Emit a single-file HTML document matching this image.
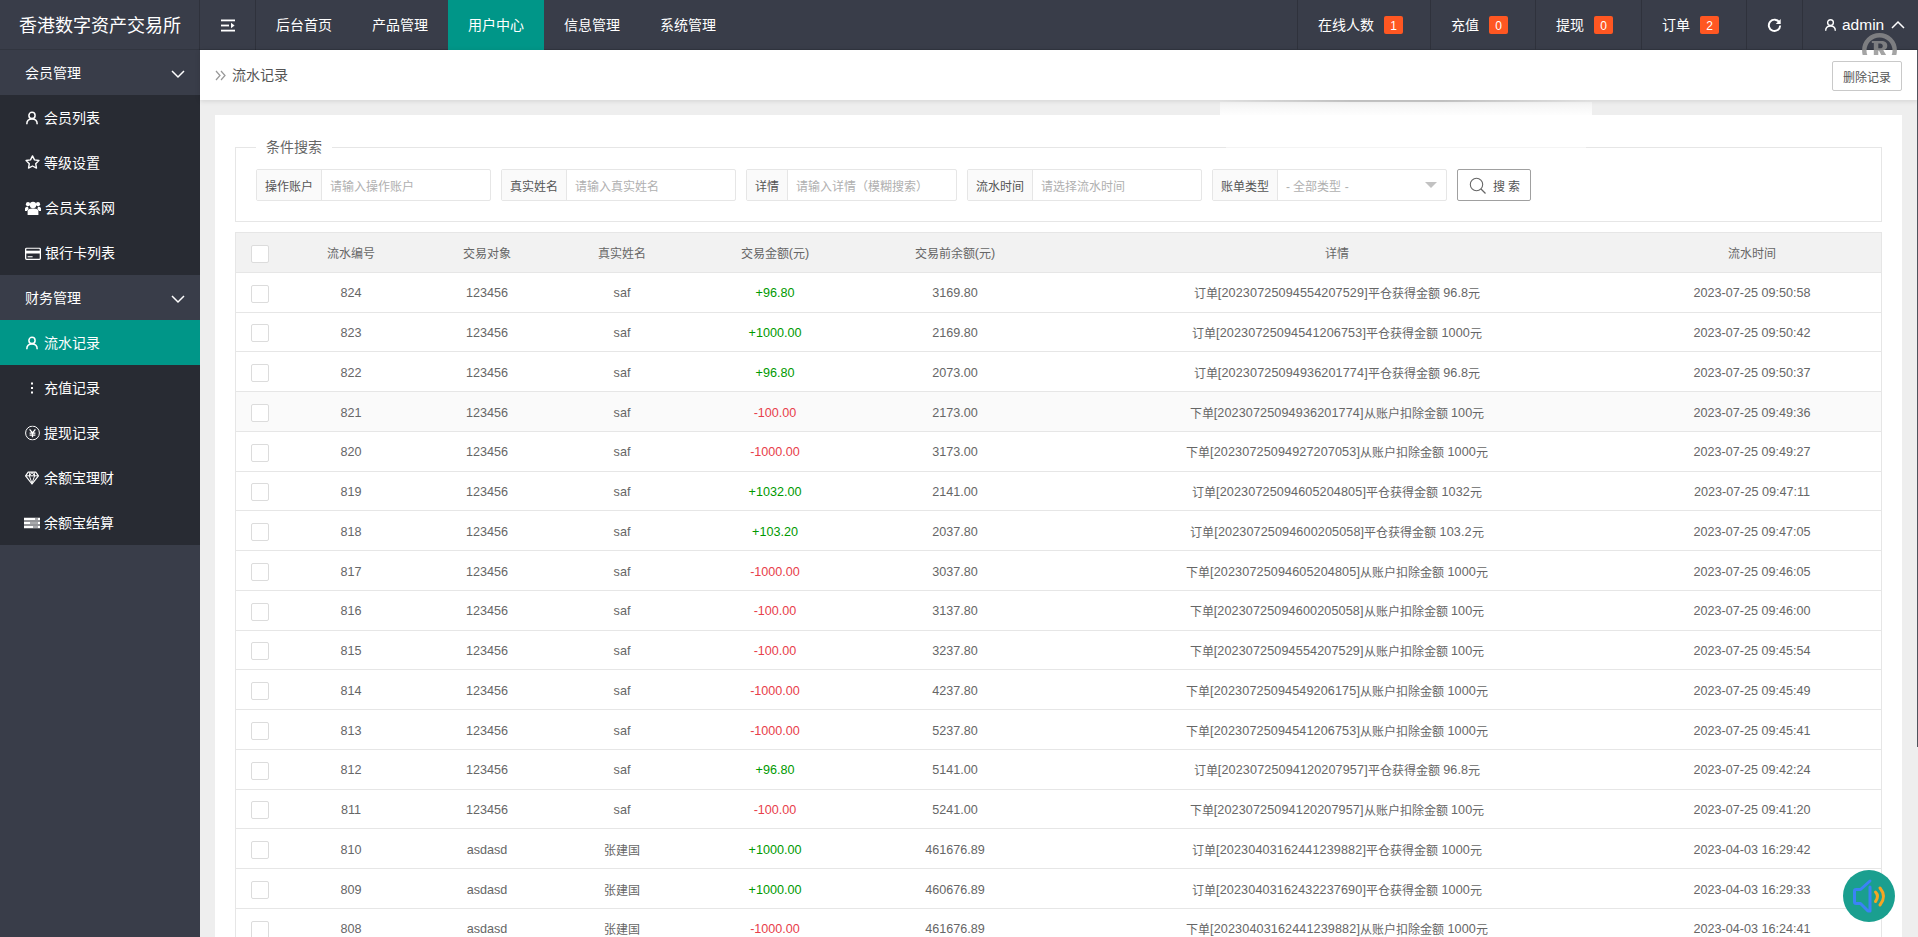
<!DOCTYPE html><html lang="zh-CN"><head><meta charset="utf-8"><title>流水记录</title><style>
*{box-sizing:border-box;margin:0;padding:0}
html,body{width:1918px;height:937px;overflow:hidden}
body{position:relative;background:#eee;font-family:"Liberation Sans",sans-serif;font-size:14px;color:#666;line-height:1}
.abs{position:absolute}
#hdr{position:absolute;left:0;top:0;width:1918px;height:50px;background:#393d49;color:#fff}
#logo{position:absolute;left:0;top:0;width:200px;height:50px;line-height:52px;text-align:center;font-size:18px;color:#fff}
.vd{position:absolute;top:0;width:1px;height:50px;background:#2f323c}
.nav{font-weight:500;position:absolute;top:0;height:50px;line-height:51px;text-align:center;font-size:14px;color:#fff;white-space:nowrap}
.nav.on{background:#009688}
.bdg{display:inline-block;height:18px;line-height:20px;padding:0 6px;min-width:19.4px;text-align:center;background:#ff5722;border-radius:2px;font-size:12px;color:#fff;vertical-align:middle;margin-left:10px;position:relative;top:-1px}
#side{font-weight:500;position:absolute;left:0;top:50px;width:200px;height:887px;background:#393d49;color:#fff}
.sh{height:45px;line-height:46px;padding-left:25px;font-size:14px;position:relative;background:#393d49}
.sh svg{position:absolute;right:15px;top:20px}
.si{height:45px;line-height:46px;padding-left:25px;font-size:14px;background:#282b33;position:relative;white-space:nowrap}
.si.on{background:#009688}
.si .ic{position:absolute;left:25px;top:50%;transform:translateY(-50%)}
.si span{position:absolute;left:44px;top:0}
#bc{position:absolute;left:200px;top:50px;width:1718px;height:50px;background:#fff;box-shadow:0 1px 5px rgba(0,0,0,.12)}
#bc .t{position:absolute;left:32px;top:0;line-height:51px;font-size:14px;color:#555}
#del{position:absolute;left:1832px;top:61px;width:70px;height:30px;border:1px solid #c9c9c9;border-radius:2px;background:#fff;font-size:12px;line-height:32px;text-align:center;color:#555}
#card{position:absolute;left:215px;top:115px;width:1687px;height:840px;background:#fff}
#fs{position:absolute;left:235px;top:147px;width:1647px;height:75px;border:1px solid #e6e6e6}
#lg{position:absolute;left:256px;top:139px;padding:0 10px;background:#fff;font-size:14px;line-height:16px;color:#666}
.grp{position:absolute;top:169px;height:32px;border:1px solid #e6e6e6;border-radius:2px;background:#fff}
.grp .l{position:absolute;left:0;top:0;height:30px;line-height:34px;background:#fafafa;border-right:1px solid #e6e6e6;font-size:12px;color:#555;text-align:center}
.grp .p{position:absolute;top:0;height:30px;line-height:34px;font-size:12px;color:#b0b0b0;white-space:nowrap}
#sb{position:absolute;left:1457px;top:169px;width:74px;height:32px;border:1px solid #a0a0a0;border-radius:2px;background:#fff;font-size:12px;line-height:34px;color:#555}
#tb{position:absolute;left:235px;top:232px;width:1647px;height:720px;border:1px solid #e6e6e6;border-bottom:0}
#th{position:absolute;left:0;top:0;width:1645px;height:40px;background:#f2f2f2;border-bottom:1px solid #e6e6e6}
.r{position:absolute;left:0;width:1645px;border-bottom:1px solid #e6e6e6}
.r.hv{background:#fafafa}
.c{position:absolute;top:0;height:100%;text-align:center;font-size:12px;color:#666;white-space:nowrap}
#th{line-height:43px}
.n{position:relative;top:-1px;font-size:12.6px}
.cb{position:absolute;left:15px;width:18px;height:18px;border:1px solid #dcdcdc;border-radius:2px;background:#fff}
.d .n{letter-spacing:.13px}
.g{color:#090}.rd{color:#e8404a}
</style></head><body>
<div id="hdr"><div id="logo">香港数字资产交易所</div>
<div class="vd" style="left:199px"></div><div class="vd" style="left:255px"></div><div class="abs" style="left:0;top:49px;width:1918px;height:1px;background:rgba(0,0,0,.13)"></div>
<svg class="abs" style="left:221px;top:18.500px" width="14" height="13" viewBox="0 0 14 13"><rect x="0" y="0.500" width="14" height="1.800" fill="#fff"/><rect x="0" y="5.600" width="8" height="1.800" fill="#fff"/><path d="M10 3.800l3.600 2.700L10 9.200z" fill="#fff"/><rect x="0" y="10.700" width="14" height="1.800" fill="#fff"/></svg>
<div class="nav" style="left:256px;width:96px">后台首页</div>
<div class="nav" style="left:352px;width:96px">产品管理</div>
<div class="nav on" style="left:448px;width:96px">用户中心</div>
<div class="nav" style="left:544px;width:96px">信息管理</div>
<div class="nav" style="left:640px;width:96px">系统管理</div>
<div class="vd" style="left:1297px"></div>
<div class="vd" style="left:1430px"></div>
<div class="vd" style="left:1535px"></div>
<div class="vd" style="left:1641px"></div>
<div class="vd" style="left:1746px"></div>
<div class="vd" style="left:1802px"></div>
<div class="nav" style="left:1298px;width:132px;text-align:left;padding-left:20px">在线人数<span class="bdg">1</span></div>
<div class="nav" style="left:1431px;width:104px;text-align:left;padding-left:20px">充值<span class="bdg">0</span></div>
<div class="nav" style="left:1536px;width:105px;text-align:left;padding-left:20px">提现<span class="bdg">0</span></div>
<div class="nav" style="left:1642px;width:104px;text-align:left;padding-left:20px">订单<span class="bdg">2</span></div>
<svg class="abs" style="left:1766.500px;top:17.500px" width="15" height="15" viewBox="0 0 14 14"><path d="M11.600 4.200A5.300 5.300 0 1 0 12.300 7" fill="none" stroke="#fff" stroke-width="1.800"/><path d="M12.800 1v4.600H8.200z" fill="#fff"/></svg>
<div class="nav" style="left:1803px;width:115px;font-size:15.500px;text-align:left"><svg class="abs" style="left:20.500px;top:17.500px" width="13" height="14" viewBox="0 0 14 14"><circle cx="7" cy="4.400" r="3.100" fill="none" stroke="#fff" stroke-width="1.500"/><path d="M1.800 13.200c0-3.200 2.200-5.200 5.200-5.200s5.200 2 5.200 5.200" fill="none" stroke="#fff" stroke-width="1.500"/></svg><span class="abs" style="left:39px;top:-1px">admin</span><svg class="abs" style="left:88px;top:20px" width="14" height="9" viewBox="0 0 14 9"><path d="M1 8l6-6 6 6" fill="none" stroke="#fff" stroke-width="1.500"/></svg></div>
</div>
<div id="side">
<div class="sh">会员管理<svg width="14" height="9" viewBox="0 0 14 9"><path d="M1 1l6 6 6-6" fill="none" stroke="#fff" stroke-width="1.500"/></svg></div>
<div class="si"><svg class="ic" width="14" height="14" viewBox="0 0 14 14"><circle cx="7" cy="4.4" r="3.1" fill="none" stroke="currentColor" stroke-width="1.5"/><path d="M1.8 13.2c0-3.2 2.2-5.2 5.2-5.2s5.2 2 5.2 5.2" fill="none" stroke="currentColor" stroke-width="1.5"/></svg><span>会员列表</span></div>
<div class="si"><svg class="ic" style="margin-top:-1px" width="15" height="14" viewBox="0 0 15 14"><path d="M7.5 .9l2 4 4.400.65-3.200 3.100.78 4.400L7.5 11l-3.980 2.050.78-4.400-3.200-3.100 4.400-.65z" fill="none" stroke="currentColor" stroke-width="1.4" stroke-linejoin="round"/></svg><span>等级设置</span></div>
<div class="si"><svg class="ic" width="16" height="14" viewBox="0 0 16 14"><circle cx="8" cy="4" r="3.2" fill="currentColor"/><circle cx="3" cy="3.2" r="2.1" fill="currentColor"/><circle cx="13" cy="3.2" r="2.1" fill="currentColor"/><path d="M2.6 14V10.4C2.6 8 5 7.4 8 7.4s5.400.6 5.400 3V14z" fill="currentColor"/><path d="M0 10V7.600C0 6.400 1.400 5.800 3 5.800L3.600 8 2 10zM16 10V7.600C16 6.400 14.600 5.800 13 5.800L12.400 8 14 10z" fill="currentColor"/></svg><span style="left:45px">会员关系网</span></div>
<div class="si"><svg class="ic" width="16" height="13" viewBox="0 0 16 13" style="margin-top:1px"><rect x=".65" y=".65" width="14.700" height="11.200" rx="1" fill="none" stroke="currentColor" stroke-width="1.300"/><rect x="1" y="3.200" width="14" height="2.800" fill="currentColor"/><rect x="2.600" y="8.700" width="5" height="1.100" fill="currentColor"/></svg><span style="left:45px">银行卡列表</span></div>
<div class="sh">财务管理<svg width="14" height="9" viewBox="0 0 14 9"><path d="M1 1l6 6 6-6" fill="none" stroke="#fff" stroke-width="1.500"/></svg></div>
<div class="si on"><svg class="ic" width="14" height="14" viewBox="0 0 14 14"><circle cx="7" cy="4.4" r="3.1" fill="none" stroke="currentColor" stroke-width="1.5"/><path d="M1.8 13.2c0-3.2 2.2-5.2 5.2-5.2s5.2 2 5.2 5.2" fill="none" stroke="currentColor" stroke-width="1.5"/></svg><span>流水记录</span></div>
<div class="si"><svg class="ic" width="14" height="14" viewBox="0 0 14 14"><rect x="6" y="1.500" width="2" height="2" fill="currentColor"/><rect x="6" y="6" width="2" height="2" fill="currentColor"/><rect x="6" y="10.500" width="2" height="2" fill="currentColor"/></svg><span>充值记录</span></div>
<div class="si"><svg class="ic" width="15" height="15" viewBox="0 0 15 15"><circle cx="7.500" cy="7.500" r="6.900" fill="none" stroke="currentColor" stroke-width="1"/><path d="M4.600 3.800L7.500 7.400 10.400 3.800M7.500 7.400V11.800M4.600 7.700h5.800M4.600 9.600h5.800" fill="none" stroke="currentColor" stroke-width="1.300"/></svg><span>提现记录</span></div>
<div class="si"><svg class="ic" width="14" height="14" viewBox="0 0 14 14"><path d="M3.200 1.200h7.600L13.400 4.800 7 13 .6 4.800z" fill="none" stroke="currentColor" stroke-width="1.200" stroke-linejoin="round"/><path d="M.8 4.800h12.400M4.800 1.400L4.400 4.800 7 12.400 9.600 4.800 9.200 1.400M4.400 4.800L7 1.400 9.600 4.800" fill="none" stroke="currentColor" stroke-width="1"/></svg><span>余额宝理财</span></div>
<div class="si"><svg class="ic" width="16" height="11" viewBox="0 0 16 11" style="left:24px"><rect x="0" y="0" width="16" height="3" fill="currentColor"/><rect x="0" y="4" width="16" height="3" fill="currentColor"/><rect x="0" y="8" width="16" height="3" fill="currentColor"/><rect x="11" y="1.100" width="3" height=".8" fill="#282b33"/><rect x="6" y="5.100" width="8" height=".8" fill="#282b33"/><rect x="9" y="9.100" width="5" height=".8" fill="#282b33"/></svg><span>余额宝结算</span></div>
</div>
<div id="bc"><svg class="abs" style="left:15px;top:20px" width="11" height="11" viewBox="0 0 11 11"><path d="M1 1l4 4.500L1 10M6 1l4 4.500L6 10" fill="none" stroke="#999" stroke-width="1.250"/></svg><div class="t">流水记录</div></div>
<div id="del">删除记录</div>
<div id="card"></div><div id="fs"></div><div id="lg">条件搜索</div>
<div class="grp" style="left:256px;width:235px"><div class="l" style="width:65px">操作账户</div><div class="p" style="left:73px">请输入操作账户</div></div>
<div class="grp" style="left:501px;width:235px"><div class="l" style="width:65px">真实姓名</div><div class="p" style="left:73px">请输入真实姓名</div></div>
<div class="grp" style="left:746px;width:211px"><div class="l" style="width:41px">详情</div><div class="p" style="left:49px">请输入详情（模糊搜索）</div></div>
<div class="grp" style="left:967px;width:235px"><div class="l" style="width:65px">流水时间</div><div class="p" style="left:73px">请选择流水时间</div></div>
<div class="grp" style="left:1212px;width:235px"><div class="l" style="width:65px">账单类型</div><div class="p" style="left:73px">- 全部类型 -</div><svg class="abs" style="right:9px;top:12px" width="12" height="6" viewBox="0 0 12 6"><path d="M0 0h12L6 6z" fill="#c2c2c2"/></svg></div>
<div id="sb"><svg class="abs" style="left:11px;top:7px" width="18" height="18" viewBox="0 0 18 18"><circle cx="7.500" cy="7.500" r="6.200" fill="none" stroke="#666" stroke-width="1.100"/><path d="M12 12l4.500 4.500" stroke="#666" stroke-width="1.300"/></svg><span class="abs" style="left:35px;top:0">搜 索</span></div>
<div id="tb"><div id="th"><div class="cb" style="top:12px"></div>
<div class="c" style="left:50px;width:130px">流水编号</div>
<div class="c" style="left:186px;width:130px">交易对象</div>
<div class="c" style="left:321px;width:130px">真实姓名</div>
<div class="c" style="left:454px;width:170px">交易金额<span class="n">(</span>元<span class="n">)</span></div>
<div class="c" style="left:629px;width:180px">交易前余额<span class="n">(</span>元<span class="n">)</span></div>
<div class="c" style="left:821px;width:560px">详情</div>
<div class="c" style="left:1391px;width:250px">流水时间</div>
</div>
<div class="r" style="top:40px;height:40px;line-height:43px"><div class="cb" style="top:12px"></div>
<div class="c" style="left:50px;width:130px"><span class="n">824</span></div>
<div class="c" style="left:186px;width:130px"><span class="n">123456</span></div>
<div class="c" style="left:321px;width:130px"><span class="n">saf</span></div>
<div class="c g" style="left:454px;width:170px"><span class="n">+96.80</span></div>
<div class="c" style="left:629px;width:180px"><span class="n">3169.80</span></div>
<div class="c d" style="left:821px;width:560px">订单<span class="n">[20230725094554207529]</span>平仓获得金额 <span class="n">96.8</span>元</div>
<div class="c" style="left:1391px;width:250px"><span class="n">2023-07-25 09:50:58</span></div>
</div>
<div class="r" style="top:80px;height:39px;line-height:42px"><div class="cb" style="top:11px"></div>
<div class="c" style="left:50px;width:130px"><span class="n">823</span></div>
<div class="c" style="left:186px;width:130px"><span class="n">123456</span></div>
<div class="c" style="left:321px;width:130px"><span class="n">saf</span></div>
<div class="c g" style="left:454px;width:170px"><span class="n">+1000.00</span></div>
<div class="c" style="left:629px;width:180px"><span class="n">2169.80</span></div>
<div class="c d" style="left:821px;width:560px">订单<span class="n">[20230725094541206753]</span>平仓获得金额 <span class="n">1000</span>元</div>
<div class="c" style="left:1391px;width:250px"><span class="n">2023-07-25 09:50:42</span></div>
</div>
<div class="r" style="top:119px;height:40px;line-height:45px"><div class="cb" style="top:12px"></div>
<div class="c" style="left:50px;width:130px"><span class="n">822</span></div>
<div class="c" style="left:186px;width:130px"><span class="n">123456</span></div>
<div class="c" style="left:321px;width:130px"><span class="n">saf</span></div>
<div class="c g" style="left:454px;width:170px"><span class="n">+96.80</span></div>
<div class="c" style="left:629px;width:180px"><span class="n">2073.00</span></div>
<div class="c d" style="left:821px;width:560px">订单<span class="n">[20230725094936201774]</span>平仓获得金额 <span class="n">96.8</span>元</div>
<div class="c" style="left:1391px;width:250px"><span class="n">2023-07-25 09:50:37</span></div>
</div>
<div class="r hv" style="top:159px;height:40px;line-height:45px"><div class="cb" style="top:12px"></div>
<div class="c" style="left:50px;width:130px"><span class="n">821</span></div>
<div class="c" style="left:186px;width:130px"><span class="n">123456</span></div>
<div class="c" style="left:321px;width:130px"><span class="n">saf</span></div>
<div class="c rd" style="left:454px;width:170px"><span class="n">-100.00</span></div>
<div class="c" style="left:629px;width:180px"><span class="n">2173.00</span></div>
<div class="c d" style="left:821px;width:560px">下单<span class="n">[20230725094936201774]</span>从账户扣除金额 <span class="n">100</span>元</div>
<div class="c" style="left:1391px;width:250px"><span class="n">2023-07-25 09:49:36</span></div>
</div>
<div class="r" style="top:199px;height:40px;line-height:43px"><div class="cb" style="top:12px"></div>
<div class="c" style="left:50px;width:130px"><span class="n">820</span></div>
<div class="c" style="left:186px;width:130px"><span class="n">123456</span></div>
<div class="c" style="left:321px;width:130px"><span class="n">saf</span></div>
<div class="c rd" style="left:454px;width:170px"><span class="n">-1000.00</span></div>
<div class="c" style="left:629px;width:180px"><span class="n">3173.00</span></div>
<div class="c d" style="left:821px;width:560px">下单<span class="n">[20230725094927207053]</span>从账户扣除金额 <span class="n">1000</span>元</div>
<div class="c" style="left:1391px;width:250px"><span class="n">2023-07-25 09:49:27</span></div>
</div>
<div class="r" style="top:239px;height:39px;line-height:42px"><div class="cb" style="top:11px"></div>
<div class="c" style="left:50px;width:130px"><span class="n">819</span></div>
<div class="c" style="left:186px;width:130px"><span class="n">123456</span></div>
<div class="c" style="left:321px;width:130px"><span class="n">saf</span></div>
<div class="c g" style="left:454px;width:170px"><span class="n">+1032.00</span></div>
<div class="c" style="left:629px;width:180px"><span class="n">2141.00</span></div>
<div class="c d" style="left:821px;width:560px">订单<span class="n">[20230725094605204805]</span>平仓获得金额 <span class="n">1032</span>元</div>
<div class="c" style="left:1391px;width:250px"><span class="n">2023-07-25 09:47:11</span></div>
</div>
<div class="r" style="top:278px;height:40px;line-height:45px"><div class="cb" style="top:12px"></div>
<div class="c" style="left:50px;width:130px"><span class="n">818</span></div>
<div class="c" style="left:186px;width:130px"><span class="n">123456</span></div>
<div class="c" style="left:321px;width:130px"><span class="n">saf</span></div>
<div class="c g" style="left:454px;width:170px"><span class="n">+103.20</span></div>
<div class="c" style="left:629px;width:180px"><span class="n">2037.80</span></div>
<div class="c d" style="left:821px;width:560px">订单<span class="n">[20230725094600205058]</span>平仓获得金额 <span class="n">103.2</span>元</div>
<div class="c" style="left:1391px;width:250px"><span class="n">2023-07-25 09:47:05</span></div>
</div>
<div class="r" style="top:318px;height:40px;line-height:45px"><div class="cb" style="top:12px"></div>
<div class="c" style="left:50px;width:130px"><span class="n">817</span></div>
<div class="c" style="left:186px;width:130px"><span class="n">123456</span></div>
<div class="c" style="left:321px;width:130px"><span class="n">saf</span></div>
<div class="c rd" style="left:454px;width:170px"><span class="n">-1000.00</span></div>
<div class="c" style="left:629px;width:180px"><span class="n">3037.80</span></div>
<div class="c d" style="left:821px;width:560px">下单<span class="n">[20230725094605204805]</span>从账户扣除金额 <span class="n">1000</span>元</div>
<div class="c" style="left:1391px;width:250px"><span class="n">2023-07-25 09:46:05</span></div>
</div>
<div class="r" style="top:358px;height:40px;line-height:43px"><div class="cb" style="top:12px"></div>
<div class="c" style="left:50px;width:130px"><span class="n">816</span></div>
<div class="c" style="left:186px;width:130px"><span class="n">123456</span></div>
<div class="c" style="left:321px;width:130px"><span class="n">saf</span></div>
<div class="c rd" style="left:454px;width:170px"><span class="n">-100.00</span></div>
<div class="c" style="left:629px;width:180px"><span class="n">3137.80</span></div>
<div class="c d" style="left:821px;width:560px">下单<span class="n">[20230725094600205058]</span>从账户扣除金额 <span class="n">100</span>元</div>
<div class="c" style="left:1391px;width:250px"><span class="n">2023-07-25 09:46:00</span></div>
</div>
<div class="r" style="top:398px;height:39px;line-height:42px"><div class="cb" style="top:11px"></div>
<div class="c" style="left:50px;width:130px"><span class="n">815</span></div>
<div class="c" style="left:186px;width:130px"><span class="n">123456</span></div>
<div class="c" style="left:321px;width:130px"><span class="n">saf</span></div>
<div class="c rd" style="left:454px;width:170px"><span class="n">-100.00</span></div>
<div class="c" style="left:629px;width:180px"><span class="n">3237.80</span></div>
<div class="c d" style="left:821px;width:560px">下单<span class="n">[20230725094554207529]</span>从账户扣除金额 <span class="n">100</span>元</div>
<div class="c" style="left:1391px;width:250px"><span class="n">2023-07-25 09:45:54</span></div>
</div>
<div class="r" style="top:437px;height:40px;line-height:45px"><div class="cb" style="top:12px"></div>
<div class="c" style="left:50px;width:130px"><span class="n">814</span></div>
<div class="c" style="left:186px;width:130px"><span class="n">123456</span></div>
<div class="c" style="left:321px;width:130px"><span class="n">saf</span></div>
<div class="c rd" style="left:454px;width:170px"><span class="n">-1000.00</span></div>
<div class="c" style="left:629px;width:180px"><span class="n">4237.80</span></div>
<div class="c d" style="left:821px;width:560px">下单<span class="n">[20230725094549206175]</span>从账户扣除金额 <span class="n">1000</span>元</div>
<div class="c" style="left:1391px;width:250px"><span class="n">2023-07-25 09:45:49</span></div>
</div>
<div class="r" style="top:477px;height:40px;line-height:45px"><div class="cb" style="top:12px"></div>
<div class="c" style="left:50px;width:130px"><span class="n">813</span></div>
<div class="c" style="left:186px;width:130px"><span class="n">123456</span></div>
<div class="c" style="left:321px;width:130px"><span class="n">saf</span></div>
<div class="c rd" style="left:454px;width:170px"><span class="n">-1000.00</span></div>
<div class="c" style="left:629px;width:180px"><span class="n">5237.80</span></div>
<div class="c d" style="left:821px;width:560px">下单<span class="n">[20230725094541206753]</span>从账户扣除金额 <span class="n">1000</span>元</div>
<div class="c" style="left:1391px;width:250px"><span class="n">2023-07-25 09:45:41</span></div>
</div>
<div class="r" style="top:517px;height:40px;line-height:43px"><div class="cb" style="top:12px"></div>
<div class="c" style="left:50px;width:130px"><span class="n">812</span></div>
<div class="c" style="left:186px;width:130px"><span class="n">123456</span></div>
<div class="c" style="left:321px;width:130px"><span class="n">saf</span></div>
<div class="c g" style="left:454px;width:170px"><span class="n">+96.80</span></div>
<div class="c" style="left:629px;width:180px"><span class="n">5141.00</span></div>
<div class="c d" style="left:821px;width:560px">订单<span class="n">[20230725094120207957]</span>平仓获得金额 <span class="n">96.8</span>元</div>
<div class="c" style="left:1391px;width:250px"><span class="n">2023-07-25 09:42:24</span></div>
</div>
<div class="r" style="top:557px;height:39px;line-height:42px"><div class="cb" style="top:11px"></div>
<div class="c" style="left:50px;width:130px"><span class="n">811</span></div>
<div class="c" style="left:186px;width:130px"><span class="n">123456</span></div>
<div class="c" style="left:321px;width:130px"><span class="n">saf</span></div>
<div class="c rd" style="left:454px;width:170px"><span class="n">-100.00</span></div>
<div class="c" style="left:629px;width:180px"><span class="n">5241.00</span></div>
<div class="c d" style="left:821px;width:560px">下单<span class="n">[20230725094120207957]</span>从账户扣除金额 <span class="n">100</span>元</div>
<div class="c" style="left:1391px;width:250px"><span class="n">2023-07-25 09:41:20</span></div>
</div>
<div class="r" style="top:596px;height:40px;line-height:45px"><div class="cb" style="top:12px"></div>
<div class="c" style="left:50px;width:130px"><span class="n">810</span></div>
<div class="c" style="left:186px;width:130px"><span class="n">asdasd</span></div>
<div class="c" style="left:321px;width:130px">张建国</div>
<div class="c g" style="left:454px;width:170px"><span class="n">+1000.00</span></div>
<div class="c" style="left:629px;width:180px"><span class="n">461676.89</span></div>
<div class="c d" style="left:821px;width:560px">订单<span class="n">[20230403162441239882]</span>平仓获得金额 <span class="n">1000</span>元</div>
<div class="c" style="left:1391px;width:250px"><span class="n">2023-04-03 16:29:42</span></div>
</div>
<div class="r" style="top:636px;height:40px;line-height:45px"><div class="cb" style="top:12px"></div>
<div class="c" style="left:50px;width:130px"><span class="n">809</span></div>
<div class="c" style="left:186px;width:130px"><span class="n">asdasd</span></div>
<div class="c" style="left:321px;width:130px">张建国</div>
<div class="c g" style="left:454px;width:170px"><span class="n">+1000.00</span></div>
<div class="c" style="left:629px;width:180px"><span class="n">460676.89</span></div>
<div class="c d" style="left:821px;width:560px">订单<span class="n">[20230403162432237690]</span>平仓获得金额 <span class="n">1000</span>元</div>
<div class="c" style="left:1391px;width:250px"><span class="n">2023-04-03 16:29:33</span></div>
</div>
<div class="r" style="top:676px;height:40px;line-height:43px"><div class="cb" style="top:12px"></div>
<div class="c" style="left:50px;width:130px"><span class="n">808</span></div>
<div class="c" style="left:186px;width:130px"><span class="n">asdasd</span></div>
<div class="c" style="left:321px;width:130px">张建国</div>
<div class="c rd" style="left:454px;width:170px"><span class="n">-1000.00</span></div>
<div class="c" style="left:629px;width:180px"><span class="n">461676.89</span></div>
<div class="c d" style="left:821px;width:560px">下单<span class="n">[20230403162441239882]</span>从账户扣除金额 <span class="n">1000</span>元</div>
<div class="c" style="left:1391px;width:250px"><span class="n">2023-04-03 16:24:41</span></div>
</div>
</div>
<div class="abs" style="left:1917px;top:50px;width:1px;height:697px;background:#50535c"></div>
<svg class="abs" style="left:1860px;top:31px" width="40" height="24" viewBox="0 0 40 24"><g opacity=".8"><circle cx="19.500" cy="19.400" r="15.200" fill="none" stroke="#8f8f8f" stroke-width="4.400"/><path transform="translate(11.800 9.900)" fill="#8f8f8f" fill-rule="evenodd" d="M0 0H9.500C13.500 0 15.500 2 15.500 4.800C15.500 7.200 14 8.800 11.500 9.300L16 17H11L7.200 9.800H6.500V14.800H8V17H0V14.800H2V2.200H0ZM6.500 2.600V7.400H8.300C10 7.400 11 6.500 11 5C11 3.500 10 2.600 8.300 2.600Z"/></g></svg>
<div class="abs" style="left:1220px;top:102px;width:372px;height:13px;background:linear-gradient(to bottom,rgba(255,255,255,.35),rgba(255,255,255,.92))"></div>
<div class="abs" style="left:1220px;top:100px;width:372px;height:2px;background:linear-gradient(to right,rgba(0,0,0,0),rgba(0,0,0,.14) 35%,rgba(0,0,0,.14) 60%,rgba(0,0,0,0))"></div>
<div class="abs" style="left:1226px;top:147px;width:360px;height:1px;background:rgba(255,255,255,.55)"></div>
<svg class="abs" style="left:1843px;top:870px" width="52" height="52" viewBox="0 0 52 52"><circle cx="26" cy="26" r="26" fill="#1a9f8f"/><path d="M27 11l-9.500 8.500h-4.500q-1.500 0-1.500 1.500v11q0 1.500 1.500 1.500h4.500l7.500 7.500h2v-24" fill="none" stroke="#3b82f6" stroke-width="3" stroke-linejoin="round" stroke-linecap="round"/><path d="M32.500 22q4 4 0 9.500M37 18q7 8.500 0 17" fill="none" stroke="#f5a623" stroke-width="3" stroke-linecap="round"/></svg>
</body></html>
